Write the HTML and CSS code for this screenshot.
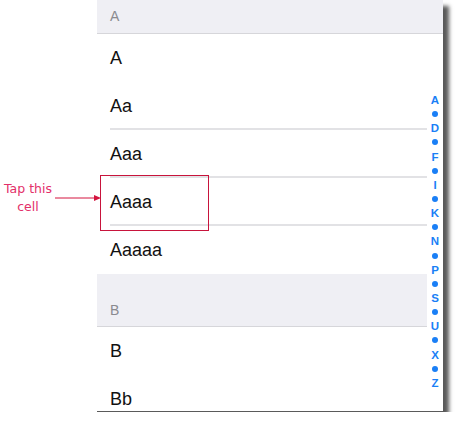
FILE: index.html
```html
<!DOCTYPE html>
<html>
<head>
<meta charset="utf-8">
<link rel="stylesheet" href="styles.css">
</head>
<body>
<div class="stage">
  <div class="note">
    <div class="note-row">
      <div class="label">Tap this<br>cell</div>
      <svg class="arrow" width="46" height="8" viewBox="0 0 46 8">
        <line x1="0" y1="4" x2="40" y2="4" stroke="#d4143f" stroke-width="1"/>
        <polygon points="39,1 46,4 39,7" fill="#d4143f"/>
      </svg>
    </div>
  </div>
  <div class="panel">
    <div class="header header-top"><span>A</span></div>
    <div class="row">A</div>
    <div class="row sep">Aa</div>
    <div class="row sep">Aaa</div>
    <div class="row sep">Aaaa</div>
    <div class="row">Aaaaa</div>
    <div class="header header-b"><span>B</span></div>
    <div class="row">B</div>
    <div class="row">Bb</div>
    <div class="highlight"></div>
    <div class="index">
      <span>A</span><i></i><span>D</span><i></i><span>F</span><i></i><span>I</span><i></i><span>K</span><i></i><span>N</span><i></i><span>P</span><i></i><span>S</span><i></i><span>U</span><i></i><span>X</span><i></i><span>Z</span>
    </div>
  </div>
</div>
</body>
</html>
```
FILE: styles.css
```css
html, body {
  margin: 0;
  padding: 0;
  background: #ffffff;
}
body {
  font-family: "Liberation Sans", Arial, sans-serif;
}
.stage {
  display: flex;
  align-items: flex-start;
}
.note {
  width: 97px;
  flex: none;
  padding-top: 180px;
  position: relative;
  z-index: 2;
}
.note-row {
  display: flex;
  align-items: center;
}
.label {
  width: 56px;
  flex: none;
  text-align: center;
  font-family: "DejaVu Sans", sans-serif;
  font-size: 12.5px;
  line-height: 18px;
  color: #e3306a;
}
.arrow {
  display: block;
  flex: none;
  margin-left: -1px;
}
.panel {
  width: 346px;
  height: 412px;
  flex: none;
  position: relative;
  overflow: hidden;
  background: #ffffff;
  box-shadow: 6px 6px 4px rgba(0, 0, 0, 0.65);
  border-bottom: 1px solid #5a5a5a;
  box-sizing: border-box;
}
.header {
  background: #efeff4;
  border-bottom: 1px solid #d6d6da;
  display: flex;
  align-items: flex-end;
  padding-left: 13px;
  box-sizing: border-box;
  font-size: 14px;
  color: #8a8a8f;
}
.header span {
  display: block;
  line-height: 14px;
}
.header-top {
  height: 34px;
  padding-bottom: 10px;
}
.header-b {
  height: 53px;
  padding-bottom: 9px;
  margin-right: 16px;
}
.row {
  height: 48px;
  display: flex;
  align-items: center;
  padding-left: 13px;
  font-size: 18px;
  color: #111111;
  box-sizing: border-box;
  position: relative;
}
.row.sep::after {
  content: "";
  position: absolute;
  left: 13px;
  right: 16px;
  bottom: 0;
  height: 2px;
  background: #e2e2e5;
}
.highlight {
  position: absolute;
  left: 3px;
  top: 175px;
  width: 109px;
  height: 56px;
  border: 1px solid #c8143c;
  box-sizing: border-box;
}
.index {
  position: absolute;
  right: 0;
  top: 93px;
  width: 16px;
  display: grid;
  grid-auto-rows: 14.15px;
  justify-items: center;
  align-items: center;
}
.index span {
  display: block;
  line-height: 12px;
  font-size: 11.5px;
  font-weight: bold;
  color: #1a7ff6;
}
.index i {
  display: block;
  width: 6px;
  height: 6px;
  border-radius: 50%;
  background: #1a7ff6;
}
```
